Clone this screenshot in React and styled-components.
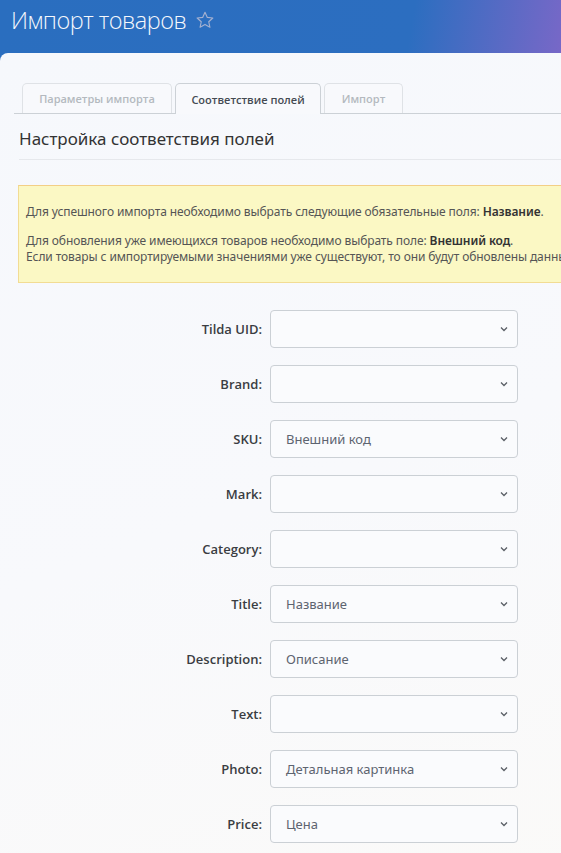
import React from 'react'
import styled, { createGlobalStyle } from 'styled-components'

const GlobalStyle = createGlobalStyle`
  html, body {
    margin: 0;
    padding: 0;
    overflow-x: hidden;
  }
  body {
    background: linear-gradient(100deg, #2a6ebf 0%, #2c6ec0 58%, #8067c8 82%, #9470c9 100%);
    font-family: "Noto Sans", "Open Sans", sans-serif;
    color: #333;
  }
`

const Header = styled.header`
  height: 53px;
  display: flex;
  align-items: flex-start;
  padding: 4px 0 0 11px;
  box-sizing: border-box;
  gap: 9px;
`

const PageTitle = styled.h1`
  margin: 0;
  font-family: "Open Sans", "Noto Sans", sans-serif;
  font-weight: 300;
  font-size: 23.5px;
  line-height: 32px;
  color: #f4f7fc;
  letter-spacing: -0.5px;
`

const StarButton = styled.span`
  display: flex;
  align-items: center;
  height: 32px;
  color: #a3b0d0;
`

const Card = styled.main`
  width: 720px;
  min-height: 800px;
  background: linear-gradient(160deg, #f6f8fc 0%, #f8f9fc 50%, #fbfaf8 100%);
  border-top-left-radius: 8px;
  padding: 30px 0 40px 14px;
  box-sizing: border-box;
`

const TabList = styled.div`
  display: flex;
  gap: 3px;
  padding-left: 8px;
  border-bottom: 1px solid #ccd1d6;
`

const Tab = styled.div`
  display: flex;
  align-items: center;
  justify-content: center;
  width: ${p => p.$w}px;
  box-sizing: border-box;
  font-family: "Open Sans", "Noto Sans", sans-serif;
  font-size: 11px;
  font-weight: 600;
  color: ${p => (p.$active ? '#444a52' : '#b4b9bf')};
  border: 1px solid ${p => (p.$active ? '#ccd1d6' : '#dfe2e6')};
  border-bottom: none;
  border-radius: 5px 5px 0 0;
  background: #f8f9fc;
  margin-bottom: ${p => (p.$active ? '-1px' : '0')};
  height: ${p => (p.$active ? '31px' : '30px')};
`

const SectionTitle = styled.h2`
  margin: 0 0 0 5px;
  padding: 14px 0 9px;
  font-size: 17px;
  font-weight: 400;
  color: #333;
  border-bottom: 1px solid #e6e8ec;
  line-height: 22px;
`

const Alert = styled.div`
  margin: 25px 0 0 4px;
  background: #fbf8c4;
  border: 1px solid #f2dc94;
  border-top-color: #f3cf86;
  padding: 18px 7px 17px;
  font-size: 12px;
  line-height: 16px;
  color: #555;
  letter-spacing: -0.1px;

  p {
    margin: 0;
  }
  p + p {
    margin-top: 13px;
  }
  b {
    font-weight: 600;
    color: #333;
  }
`

const Form = styled.div`
  display: grid;
  grid-template-columns: 248px 248px;
  column-gap: 8px;
  row-gap: 17px;
  margin-top: 27px;
`

const Label = styled.label`
  justify-self: end;
  align-self: center;
  font-family: "Open Sans", "Noto Sans", sans-serif;
  font-size: 13px;
  font-weight: 600;
  color: #3a3d42;
`

const SelectBox = styled.div`
  height: 38px;
  box-sizing: border-box;
  border: 1px solid #cbd0d5;
  border-radius: 4px;
  background: #fafbfd;
  display: flex;
  align-items: center;
  justify-content: space-between;
  padding: 0 8px 0 15px;
  font-size: 13px;
  color: #5d6470;
`

const Chevron = () => (
  <svg width="10" height="10" viewBox="0 0 10 10">
    <path d="M2 3.5 L5 6.5 L8 3.5" fill="none" stroke="#5a5f66" strokeWidth="1.3" />
  </svg>
)

const Star = () => (
  <svg width="20" height="20" viewBox="0 0 24 24">
    <path
      d="M12 2.8l2.8 6.1 6.6.7-4.9 4.5 1.4 6.6L12 17.3l-5.9 3.4 1.4-6.6-4.9-4.5 6.6-.7z"
      fill="none"
      stroke="currentColor"
      strokeWidth="1.4"
      strokeLinejoin="round"
    />
  </svg>
)

const fields = [
  ['Tilda UID', ''],
  ['Brand', ''],
  ['SKU', 'Внешний код'],
  ['Mark', ''],
  ['Category', ''],
  ['Title', 'Название'],
  ['Description', 'Описание'],
  ['Text', ''],
  ['Photo', 'Детальная картинка'],
  ['Price', 'Цена']
]

export default function App() {
  return (
    <>
      <GlobalStyle />
      <Header>
        <PageTitle>Импорт товаров</PageTitle>
        <StarButton>
          <Star />
        </StarButton>
      </Header>
      <Card>
        <TabList>
          <Tab $w={150}>Параметры импорта</Tab>
          <Tab $w={146} $active>
            Соответствие полей
          </Tab>
          <Tab $w={79}>Импорт</Tab>
        </TabList>
        <SectionTitle>Настройка соответствия полей</SectionTitle>
        <Alert>
          <p>
            Для успешного импорта необходимо выбрать следующие обязательные поля: <b>Название</b>.
          </p>
          <p>
            Для обновления уже имеющихся товаров необходимо выбрать поле: <b>Внешний код</b>.
            <br />
            Если товары с импортируемыми значениями уже существуют, то они будут обновлены
            данными.
          </p>
        </Alert>
        <Form>
          {fields.map(([name, value]) => (
            <React.Fragment key={name}>
              <Label>{name}:</Label>
              <SelectBox>
                <span>{value}</span>
                <Chevron />
              </SelectBox>
            </React.Fragment>
          ))}
        </Form>
      </Card>
    </>
  )
}
